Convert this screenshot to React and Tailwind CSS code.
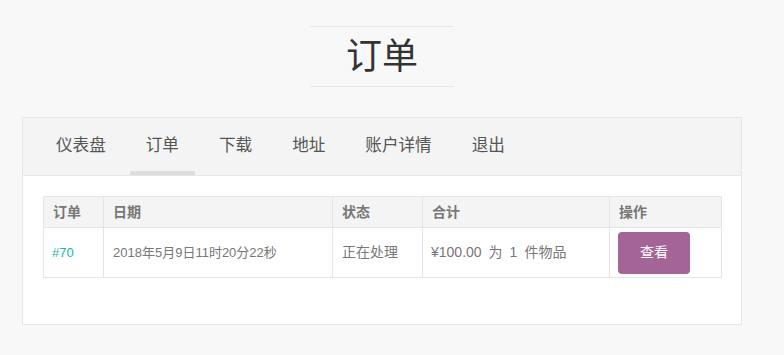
import React from "react";

export default function App() {
  const tabs = ["仪表盘", "订单", "下载", "地址", "账户详情", "退出"];

  return (
    <div className="w-[784px] h-[355px] bg-[#f8f8f8] overflow-hidden font-['Liberation_Sans','Noto_Sans_CJK_SC',sans-serif]">
      <div className="ml-[22px] w-[720px] pt-[26px]">
        {/* page title */}
        <div className="flex justify-center">
          <h1 className="w-[144px] h-[61px] border-y border-[#e8e8e8] flex items-center justify-center text-[36px] text-[#333] font-normal leading-none">
            订单
          </h1>
        </div>

        {/* account panel */}
        <div className="mt-[30px] border border-[#e6e6e6] bg-white">
          <nav className="h-[58px] bg-[#f4f4f4] border-b border-[#e6e6e6] flex pl-[17px] gap-2">
            {tabs.map((tab, idx) => (
              <div
                key={idx}
                className={
                  "h-full px-4 flex items-center text-[16.6px] text-[#555] border-b-4 " +
                  (tab === "订单" ? "border-[#dddddd]" : "border-transparent")
                }
              >
                <span className="pt-1">{tab}</span>
              </div>
            ))}
          </nav>

          <div className="px-5 pt-5 pb-[46px]">
            <table className="w-[678px] border-collapse border border-[#e4e4e4] text-[13px] text-[#777] table-fixed">
              <thead>
                <tr className="bg-[#f4f4f4] h-[31px]">
                  <th className="w-[60px] border border-[#e4e4e4] text-left font-bold text-[14px] pl-[9px]">订单</th>
                  <th className="w-[229px] border border-[#e4e4e4] text-left font-bold text-[14px] pl-[9px]">日期</th>
                  <th className="w-[90px] border border-[#e4e4e4] text-left font-bold text-[14px] pl-[9px]">状态</th>
                  <th className="w-[187px] border border-[#e4e4e4] text-left font-bold text-[14px] pl-[9px]">合计</th>
                  <th className="w-[112px] border border-[#e4e4e4] text-left font-bold text-[14px] pl-[9px]">操作</th>
                </tr>
              </thead>
              <tbody>
                <tr className="h-[50px]">
                  <td className="border border-[#e4e4e4] pl-[8px] text-[#1cb3ad]">#70</td>
                  <td className="border border-[#e4e4e4] pl-[9px]">2018年5月9日11时20分22秒</td>
                  <td className="border border-[#e4e4e4] pl-[9px] text-[14px]">正在处理</td>
                  <td className="border border-[#e4e4e4] pl-[8px] text-[14px]">¥100.00&ensp;为&ensp;1&ensp;件物品</td>
                  <td className="border border-[#e4e4e4] pl-[8px]">
                    <button className="w-[72px] h-[42px] rounded-[4px] bg-[#a46497] text-white text-[14px]">
                      查看
                    </button>
                  </td>
                </tr>
              </tbody>
            </table>
          </div>
        </div>
      </div>
    </div>
  );
}
